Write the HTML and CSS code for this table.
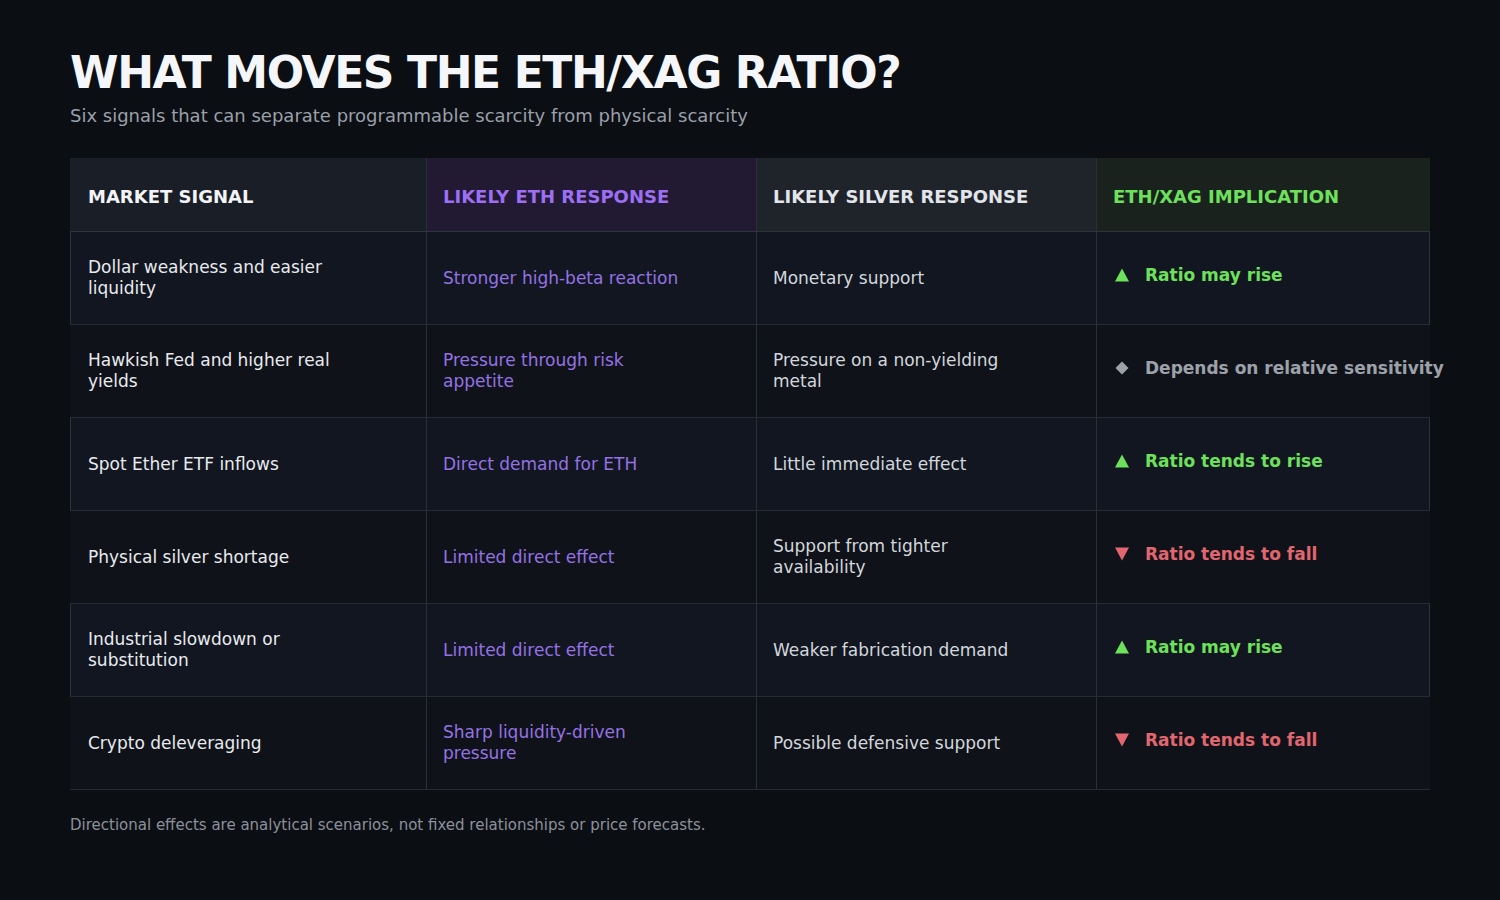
FILE: index.html
```html
<!DOCTYPE html>
<html lang="en">
<head>
<meta charset="utf-8">
<title>What moves the ETH/XAG ratio?</title>
<link rel="stylesheet" href="styles.css">
</head>
<body>
<main class="page">
  <h1 class="title">WHAT MOVES THE ETH/XAG RATIO?</h1>
  <p class="subtitle">Six signals that can separate programmable scarcity from physical scarcity</p>

  <div class="table">
    <div class="row head">
      <div class="cell c1"><span>MARKET SIGNAL</span></div>
      <div class="cell c2"><span>LIKELY ETH RESPONSE</span></div>
      <div class="cell c3"><span>LIKELY SILVER RESPONSE</span></div>
      <div class="cell c4"><span>ETH/XAG IMPLICATION</span></div>
    </div>

    <div class="row odd">
      <div class="cell c1"><span class="txt">Dollar weakness and easier liquidity</span></div>
      <div class="cell c2"><span class="txt">Stronger high-beta reaction</span></div>
      <div class="cell c3"><span class="txt">Monetary support</span></div>
      <div class="cell c4 imp-cell up"><span class="ico"><svg viewBox="0 0 14 14" width="14" height="14"><polygon points="7,0.5 14,13.5 0,13.5"/></svg></span><span class="imp">Ratio may rise</span></div>
    </div>

    <div class="row even">
      <div class="cell c1"><span class="txt">Hawkish Fed and higher real yields</span></div>
      <div class="cell c2"><span class="txt">Pressure through risk appetite</span></div>
      <div class="cell c3"><span class="txt">Pressure on a non-yielding metal</span></div>
      <div class="cell c4 imp-cell mid"><span class="ico"><svg viewBox="0 0 14 14" width="14" height="14"><polygon points="7,0.5 13.5,7 7,13.5 0.5,7"/></svg></span><span class="imp">Depends on relative sensitivity</span></div>
    </div>

    <div class="row odd">
      <div class="cell c1"><span class="txt">Spot Ether ETF inflows</span></div>
      <div class="cell c2"><span class="txt">Direct demand for ETH</span></div>
      <div class="cell c3"><span class="txt">Little immediate effect</span></div>
      <div class="cell c4 imp-cell up"><span class="ico"><svg viewBox="0 0 14 14" width="14" height="14"><polygon points="7,0.5 14,13.5 0,13.5"/></svg></span><span class="imp">Ratio tends to rise</span></div>
    </div>

    <div class="row even">
      <div class="cell c1"><span class="txt">Physical silver shortage</span></div>
      <div class="cell c2"><span class="txt">Limited direct effect</span></div>
      <div class="cell c3"><span class="txt">Support from tighter availability</span></div>
      <div class="cell c4 imp-cell down"><span class="ico"><svg viewBox="0 0 14 14" width="14" height="14"><polygon points="0,0.5 14,0.5 7,13.5"/></svg></span><span class="imp">Ratio tends to fall</span></div>
    </div>

    <div class="row odd">
      <div class="cell c1"><span class="txt">Industrial slowdown or substitution</span></div>
      <div class="cell c2"><span class="txt">Limited direct effect</span></div>
      <div class="cell c3"><span class="txt">Weaker fabrication demand</span></div>
      <div class="cell c4 imp-cell up"><span class="ico"><svg viewBox="0 0 14 14" width="14" height="14"><polygon points="7,0.5 14,13.5 0,13.5"/></svg></span><span class="imp">Ratio may rise</span></div>
    </div>

    <div class="row even">
      <div class="cell c1"><span class="txt">Crypto deleveraging</span></div>
      <div class="cell c2"><span class="txt">Sharp liquidity-driven pressure</span></div>
      <div class="cell c3"><span class="txt">Possible defensive support</span></div>
      <div class="cell c4 imp-cell down"><span class="ico"><svg viewBox="0 0 14 14" width="14" height="14"><polygon points="0,0.5 14,0.5 7,13.5"/></svg></span><span class="imp">Ratio tends to fall</span></div>
    </div>
  </div>

  <p class="footnote">Directional effects are analytical scenarios, not fixed relationships or price forecasts.</p>
</main>
</body>
</html>
```

FILE: styles.css
```css
* { box-sizing: border-box; }

html, body {
  margin: 0;
  padding: 0;
  background: #0b0e13;
}

body {
  font-family: "DejaVu Sans", "Liberation Sans", sans-serif;
  color: #e6e8ec;
  width: 1500px;
  height: 900px;
  overflow: hidden;
}

.page {
  padding: 47px 70px 0 70px;
}

.title {
  margin: 0;
  font-size: 44px;
  line-height: 52px;
  font-weight: 700;
  letter-spacing: -1.4px;
  color: #f4f6fa;
}

.subtitle {
  margin: 6px 0 0 0;
  font-size: 18px;
  line-height: 22px;
  color: #9aa0aa;
}

.table {
  margin-top: 31px;
  width: 1360px;
  display: flex;
  flex-direction: column;
  background: #10141b;
}

.row {
  display: grid;
  grid-template-columns: 356px 330px 340px 334px;
  height: 93px;
  border-bottom: 1px solid #272c34;
}

.row.head {
  height: 74px;
  border-bottom: 1px solid #2e333c;
}

.row.odd {
  background: #111620;
  box-shadow: inset 1px 0 0 #2d323b, inset -1px 0 0 #2d323b;
}

.row.even {
  background: #0f1319;
}

.cell {
  display: flex;
  align-items: center;
  padding-left: 16px;
  border-left: 1px solid #2a2f38;
  font-size: 17px;
  line-height: 21px;
}

.cell.c1 {
  border-left: none;
  padding-left: 18px;
  color: #e8eaee;
}

.cell.c2 { color: #9572e4; }
.cell.c3 { color: #d3d7dd; }

.txt {
  max-width: 248px;
}

.head .cell {
  font-size: 18px;
  font-weight: 700;
  padding-top: 3px;
}

.head .c1 { background: #1a1f27; color: #f2f4f7; }
.head .c2 { background: #221a33; color: #9d6ff2; }
.head .c3 { background: #1f232a; color: #e2e5ea; }
.head .c4 { background: #19221c; color: #6ee05e; }

.imp-cell {
  padding-bottom: 6px;
  white-space: nowrap;
}

.ico {
  width: 16px;
  display: flex;
  align-items: center;
  justify-content: flex-start;
  margin-left: 2px;
  margin-right: 14px;
  flex: none;
}

.ico svg { display: block; }

.imp {
  font-weight: 700;
  font-size: 17px;
}

.up { color: #6de15b; }
.up svg { fill: #6de15b; }
.down { color: #e2666f; }
.down svg { fill: #e2666f; }
.mid { color: #9ca1aa; }
.mid svg { fill: #9ca1aa; }

.footnote {
  margin: 26px 0 0 0;
  font-size: 15px;
  line-height: 18px;
  color: #8b919b;
}
```
